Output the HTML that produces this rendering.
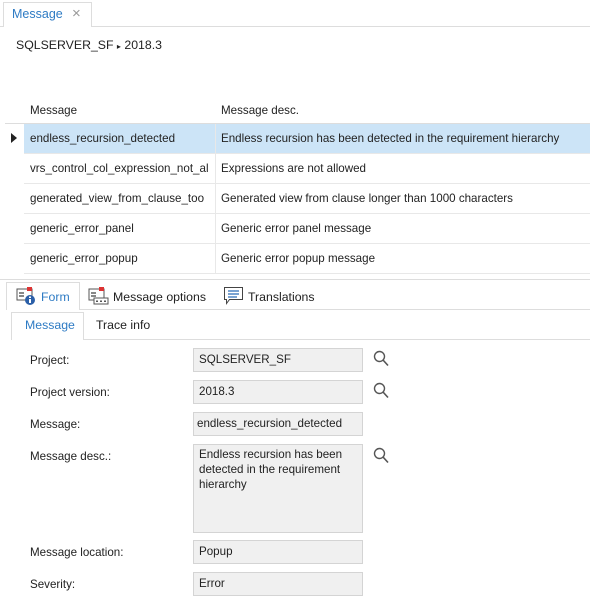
<!DOCTYPE html><html><head><style>
*{box-sizing:border-box}body{margin:0;width:590px;height:611px;background:#fff;font-family:"Liberation Sans",sans-serif;font-size:11.6px;color:#222;position:relative;overflow:hidden}
.a{position:absolute;white-space:nowrap}
.inp{position:absolute;left:193px;width:170px;height:24px;background:#f0f0f0;border:1px solid #d4d4d4;padding:4px 5px}
.row{position:absolute;left:24px;width:566px;height:30px;border-bottom:1px solid #e8e8e8}
.row span{position:absolute;top:8px;white-space:nowrap}
.row span.c1{left:6px;width:185px;overflow:hidden}
.lbl{position:absolute;left:30px}
.mag{position:absolute;left:373px}
</style></head><body>
<div class="a" style="left:0;top:26px;width:590px;border-top:1px solid #ddd"></div>
<div class="a" style="left:3px;top:2px;width:89px;height:25px;border:1px solid #ddd;border-bottom:none;background:#fff"></div>
<div class="a" style="left:12px;top:7px;color:#2e7bc4;font-size:12.5px">Message</div>
<div class="a" style="left:72px;top:5px;color:#999;font-size:15px">×</div>
<div class="a" style="left:16px;top:38px;font-size:12.3px">SQLSERVER_SF <span style="font-size:8px">▸</span> 2018.3</div>
<div class="a" style="left:30px;top:104px">Message</div>
<div class="a" style="left:221px;top:104px">Message desc.</div>
<div class="a" style="left:5px;top:123px;width:585px;border-top:1px solid #ddd"></div>
<div class="row" style="top:124px;background:#cce4f7"><span class="c1">endless_recursion_detected</span><span style="left:197px">Endless recursion has been detected in the requirement hierarchy</span></div>
<div class="a" style="left:11px;top:133px;width:0;height:0;border-left:6px solid #222;border-top:5px solid transparent;border-bottom:5px solid transparent"></div>
<div class="a" style="left:215px;top:124px;height:150px;border-left:1px solid #e8e8e8"></div>
<div class="row" style="top:154px"><span class="c1">vrs_control_col_expression_not_al</span><span style="left:197px">Expressions are not allowed</span></div>
<div class="row" style="top:184px"><span class="c1">generated_view_from_clause_too</span><span style="left:197px">Generated view from clause longer than 1000 characters</span></div>
<div class="row" style="top:214px"><span class="c1">generic_error_panel</span><span style="left:197px">Generic error panel message</span></div>
<div class="row" style="top:244px"><span class="c1">generic_error_popup</span><span style="left:197px">Generic error popup message</span></div>
<div class="a" style="left:0;top:279px;width:590px;border-top:1px solid #ddd"></div>
<div class="a" style="left:6px;top:309px;width:584px;border-top:1px solid #ddd"></div>
<div class="a" style="left:6px;top:282px;width:74px;height:28px;border:1px solid #ddd;border-bottom:none;background:#fff"></div>
<svg class="a" style="left:16px;top:286px" width="22" height="20"><rect x="1" y="3" width="15" height="11" fill="#fff" stroke="#555"/><rect x="3" y="6" width="5" height="2" fill="#888"/><rect x="3" y="9" width="5" height="2" fill="#888"/><rect x="11" y="1" width="5" height="4" fill="#d33"/><circle cx="14" cy="14" r="5" fill="#2b5fa8"/><rect x="13" y="13" width="2" height="4" fill="#fff"/><rect x="13" y="10.5" width="2" height="1.5" fill="#fff"/></svg>
<div class="a" style="left:41px;top:290px;color:#2e7bc4;font-size:12.3px">Form</div>
<svg class="a" style="left:88px;top:286px" width="22" height="20"><rect x="1" y="3" width="15" height="11" fill="#fff" stroke="#555"/><rect x="3" y="6" width="5" height="2" fill="#888"/><rect x="3" y="9" width="5" height="2" fill="#888"/><rect x="11" y="1" width="5" height="4" fill="#d33"/><rect x="6" y="12" width="14" height="6" fill="#fff" stroke="#555"/><rect x="8" y="14.5" width="2" height="1.5" fill="#555"/><rect x="12" y="14.5" width="2" height="1.5" fill="#555"/><rect x="16" y="14.5" width="2" height="1.5" fill="#555"/></svg>
<div class="a" style="left:113px;top:290px;font-size:12.3px">Message options</div>
<svg class="a" style="left:223px;top:286px" width="22" height="20"><path d="M1.5 1.5h18v12h-13l-3 4v-4h-2z" fill="#fff" stroke="#444"/><path d="M5 5h11M5 8h11M5 11h9" stroke="#2b6cb8" stroke-width="1.3"/></svg>
<div class="a" style="left:248px;top:290px;font-size:12.3px">Translations</div>
<div class="a" style="left:11px;top:339px;width:579px;border-top:1px solid #ddd"></div>
<div class="a" style="left:11px;top:312px;width:73px;height:28px;border:1px solid #ddd;border-bottom:none;background:#fff"></div>
<div class="a" style="left:25px;top:318px;color:#2e7bc4;font-size:12.3px">Message</div>
<div class="a" style="left:96px;top:318px;font-size:12.3px">Trace info</div>
<div class="lbl" style="top:354px">Project:</div><div class="inp" style="top:348px">SQLSERVER_SF</div>
<div class="lbl" style="top:386px">Project version:</div><div class="inp" style="top:380px">2018.3</div>
<div class="lbl" style="top:418px">Message:</div><div class="inp" style="top:412px;padding-left:3px">endless_recursion_detected</div>
<div class="lbl" style="top:450px">Message desc.:</div><div class="inp" style="top:444px;height:89px;white-space:normal;line-height:15px;padding-top:2px">Endless recursion has been detected in the requirement hierarchy</div>
<div class="lbl" style="top:546px">Message location:</div><div class="inp" style="top:540px">Popup</div>
<div class="lbl" style="top:578px">Severity:</div><div class="inp" style="top:572px">Error</div>
<svg class="mag" style="top:350px" width="16" height="17"><circle cx="6.5" cy="6.5" r="5" fill="none" stroke="#555" stroke-width="1.4"/><path d="M10 10l5 5.5" stroke="#555" stroke-width="1.6"/></svg>
<svg class="mag" style="top:382px" width="16" height="17"><circle cx="6.5" cy="6.5" r="5" fill="none" stroke="#555" stroke-width="1.4"/><path d="M10 10l5 5.5" stroke="#555" stroke-width="1.6"/></svg>
<svg class="mag" style="top:447px" width="16" height="17"><circle cx="6.5" cy="6.5" r="5" fill="none" stroke="#555" stroke-width="1.4"/><path d="M10 10l5 5.5" stroke="#555" stroke-width="1.6"/></svg>
</body></html>
